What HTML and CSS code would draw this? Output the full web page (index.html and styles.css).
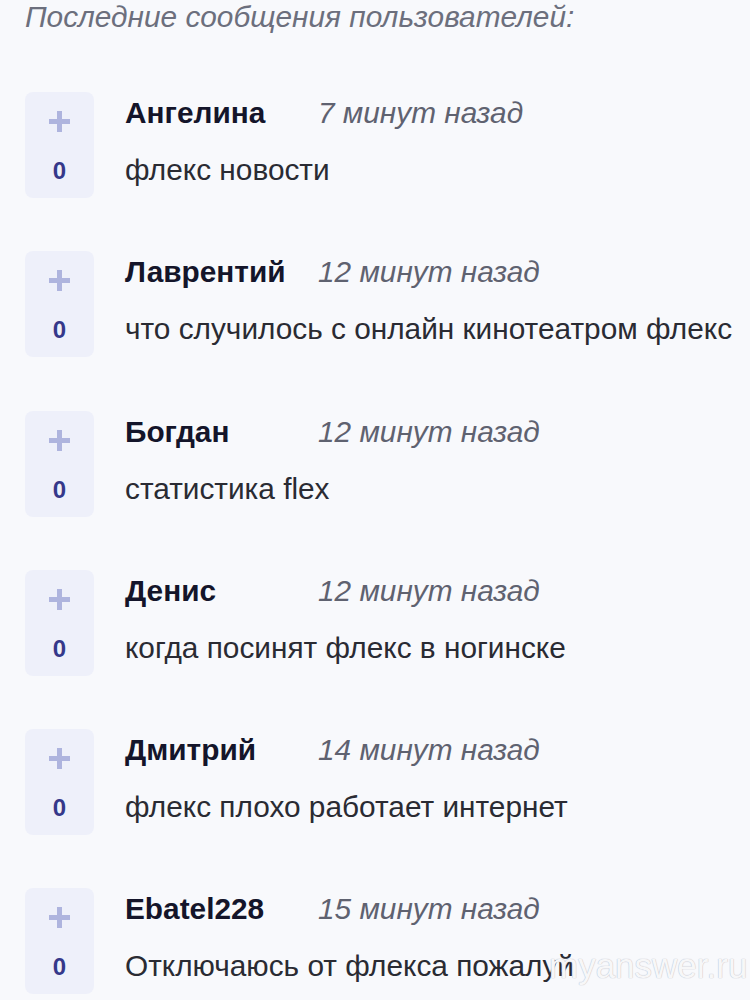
FILE: index.html
```html
<!DOCTYPE html>
<html lang="ru">
<head>
<meta charset="utf-8">
<link rel="stylesheet" href="styles.css">
</head>
<body>
<div class="page">
  <h2 class="heading">Последние сообщения пользователей:</h2>
  <ul class="list">
    <li class="item">
      <div class="vote"><span class="plus"></span><span class="count">0</span></div>
      <div class="content">
        <div class="meta"><span class="name">Ангелина</span><span class="time">7 минут назад</span></div>
        <div class="msg">флекс новости</div>
      </div>
    </li>
    <li class="item">
      <div class="vote"><span class="plus"></span><span class="count">0</span></div>
      <div class="content">
        <div class="meta"><span class="name">Лаврентий</span><span class="time">12 минут назад</span></div>
        <div class="msg">что случилось с онлайн кинотеатром флекс</div>
      </div>
    </li>
    <li class="item">
      <div class="vote"><span class="plus"></span><span class="count">0</span></div>
      <div class="content">
        <div class="meta"><span class="name">Богдан</span><span class="time">12 минут назад</span></div>
        <div class="msg">статистика flex</div>
      </div>
    </li>
    <li class="item">
      <div class="vote"><span class="plus"></span><span class="count">0</span></div>
      <div class="content">
        <div class="meta"><span class="name">Денис</span><span class="time">12 минут назад</span></div>
        <div class="msg">когда посинят флекс в ногинске</div>
      </div>
    </li>
    <li class="item">
      <div class="vote"><span class="plus"></span><span class="count">0</span></div>
      <div class="content">
        <div class="meta"><span class="name">Дмитрий</span><span class="time">14 минут назад</span></div>
        <div class="msg">флекс плохо работает интернет</div>
      </div>
    </li>
    <li class="item">
      <div class="vote"><span class="plus"></span><span class="count">0</span></div>
      <div class="content">
        <div class="meta"><span class="name">Ebatel228</span><span class="time">15 минут назад</span></div>
        <div class="msg">Отключаюсь от флекса пожалуй</div>
      </div>
    </li>
  </ul>
  <div class="watermark">myanswer.ru</div>
</div>
</body>
</html>
```

FILE: styles.css
```css
html, body {
  margin: 0;
  padding: 0;
  background: #f8f9fc;
}
body {
  font-family: "Liberation Sans", Arial, sans-serif;
  color: #2a2b33;
}
.page {
  position: relative;
  width: 750px;
  height: 1000px;
  overflow: hidden;
  padding-left: 25px;
  box-sizing: border-box;
}
.heading {
  margin: 0;
  font-size: 29.8px;
  line-height: 34px;
  font-weight: normal;
  font-style: italic;
  color: #6c6f7d;
}
.list {
  list-style: none;
  margin: 58px 0 0;
  padding: 0;
  display: flex;
  flex-direction: column;
  gap: 53.3px;
}
.item {
  display: flex;
  gap: 31px;
}
.vote {
  flex: none;
  width: 69px;
  height: 106px;
  border-radius: 8px;
  background: #eef0fa;
  display: flex;
  flex-direction: column;
  align-items: center;
}
.plus {
  position: relative;
  width: 21px;
  height: 21px;
  margin-top: 19px;
}
.plus::before, .plus::after {
  content: "";
  position: absolute;
  background: #aeb4de;
}
.plus::before {
  left: 0;
  right: 0;
  top: 8px;
  height: 5px;
}
.plus::after {
  top: 0;
  bottom: 0;
  left: 8px;
  width: 5px;
}
.count {
  margin-top: 25px;
  font-size: 24px;
  line-height: 28px;
  font-weight: bold;
  color: #35388a;
}
.content {
  display: flex;
  flex-direction: column;
}
.meta {
  display: flex;
  align-items: baseline;
  height: 42px;
  line-height: 42px;
}
.name {
  min-width: 193px;
  font-size: 29.8px;
  font-weight: bold;
  color: #14152a;
}
.time {
  font-size: 29.8px;
  font-style: italic;
  color: #5f6270;
}
.msg {
  margin-top: 15px;
  font-size: 29.8px;
  line-height: 42px;
  color: #2a2b33;
}
.watermark {
  position: absolute;
  left: 549px;
  top: 944px;
  font-size: 35px;
  line-height: 44px;
  color: rgba(255, 255, 255, 0.9);
  text-shadow: 0 0 1px #bfc1cc, 0 0 1px #bfc1cc;
}
```
